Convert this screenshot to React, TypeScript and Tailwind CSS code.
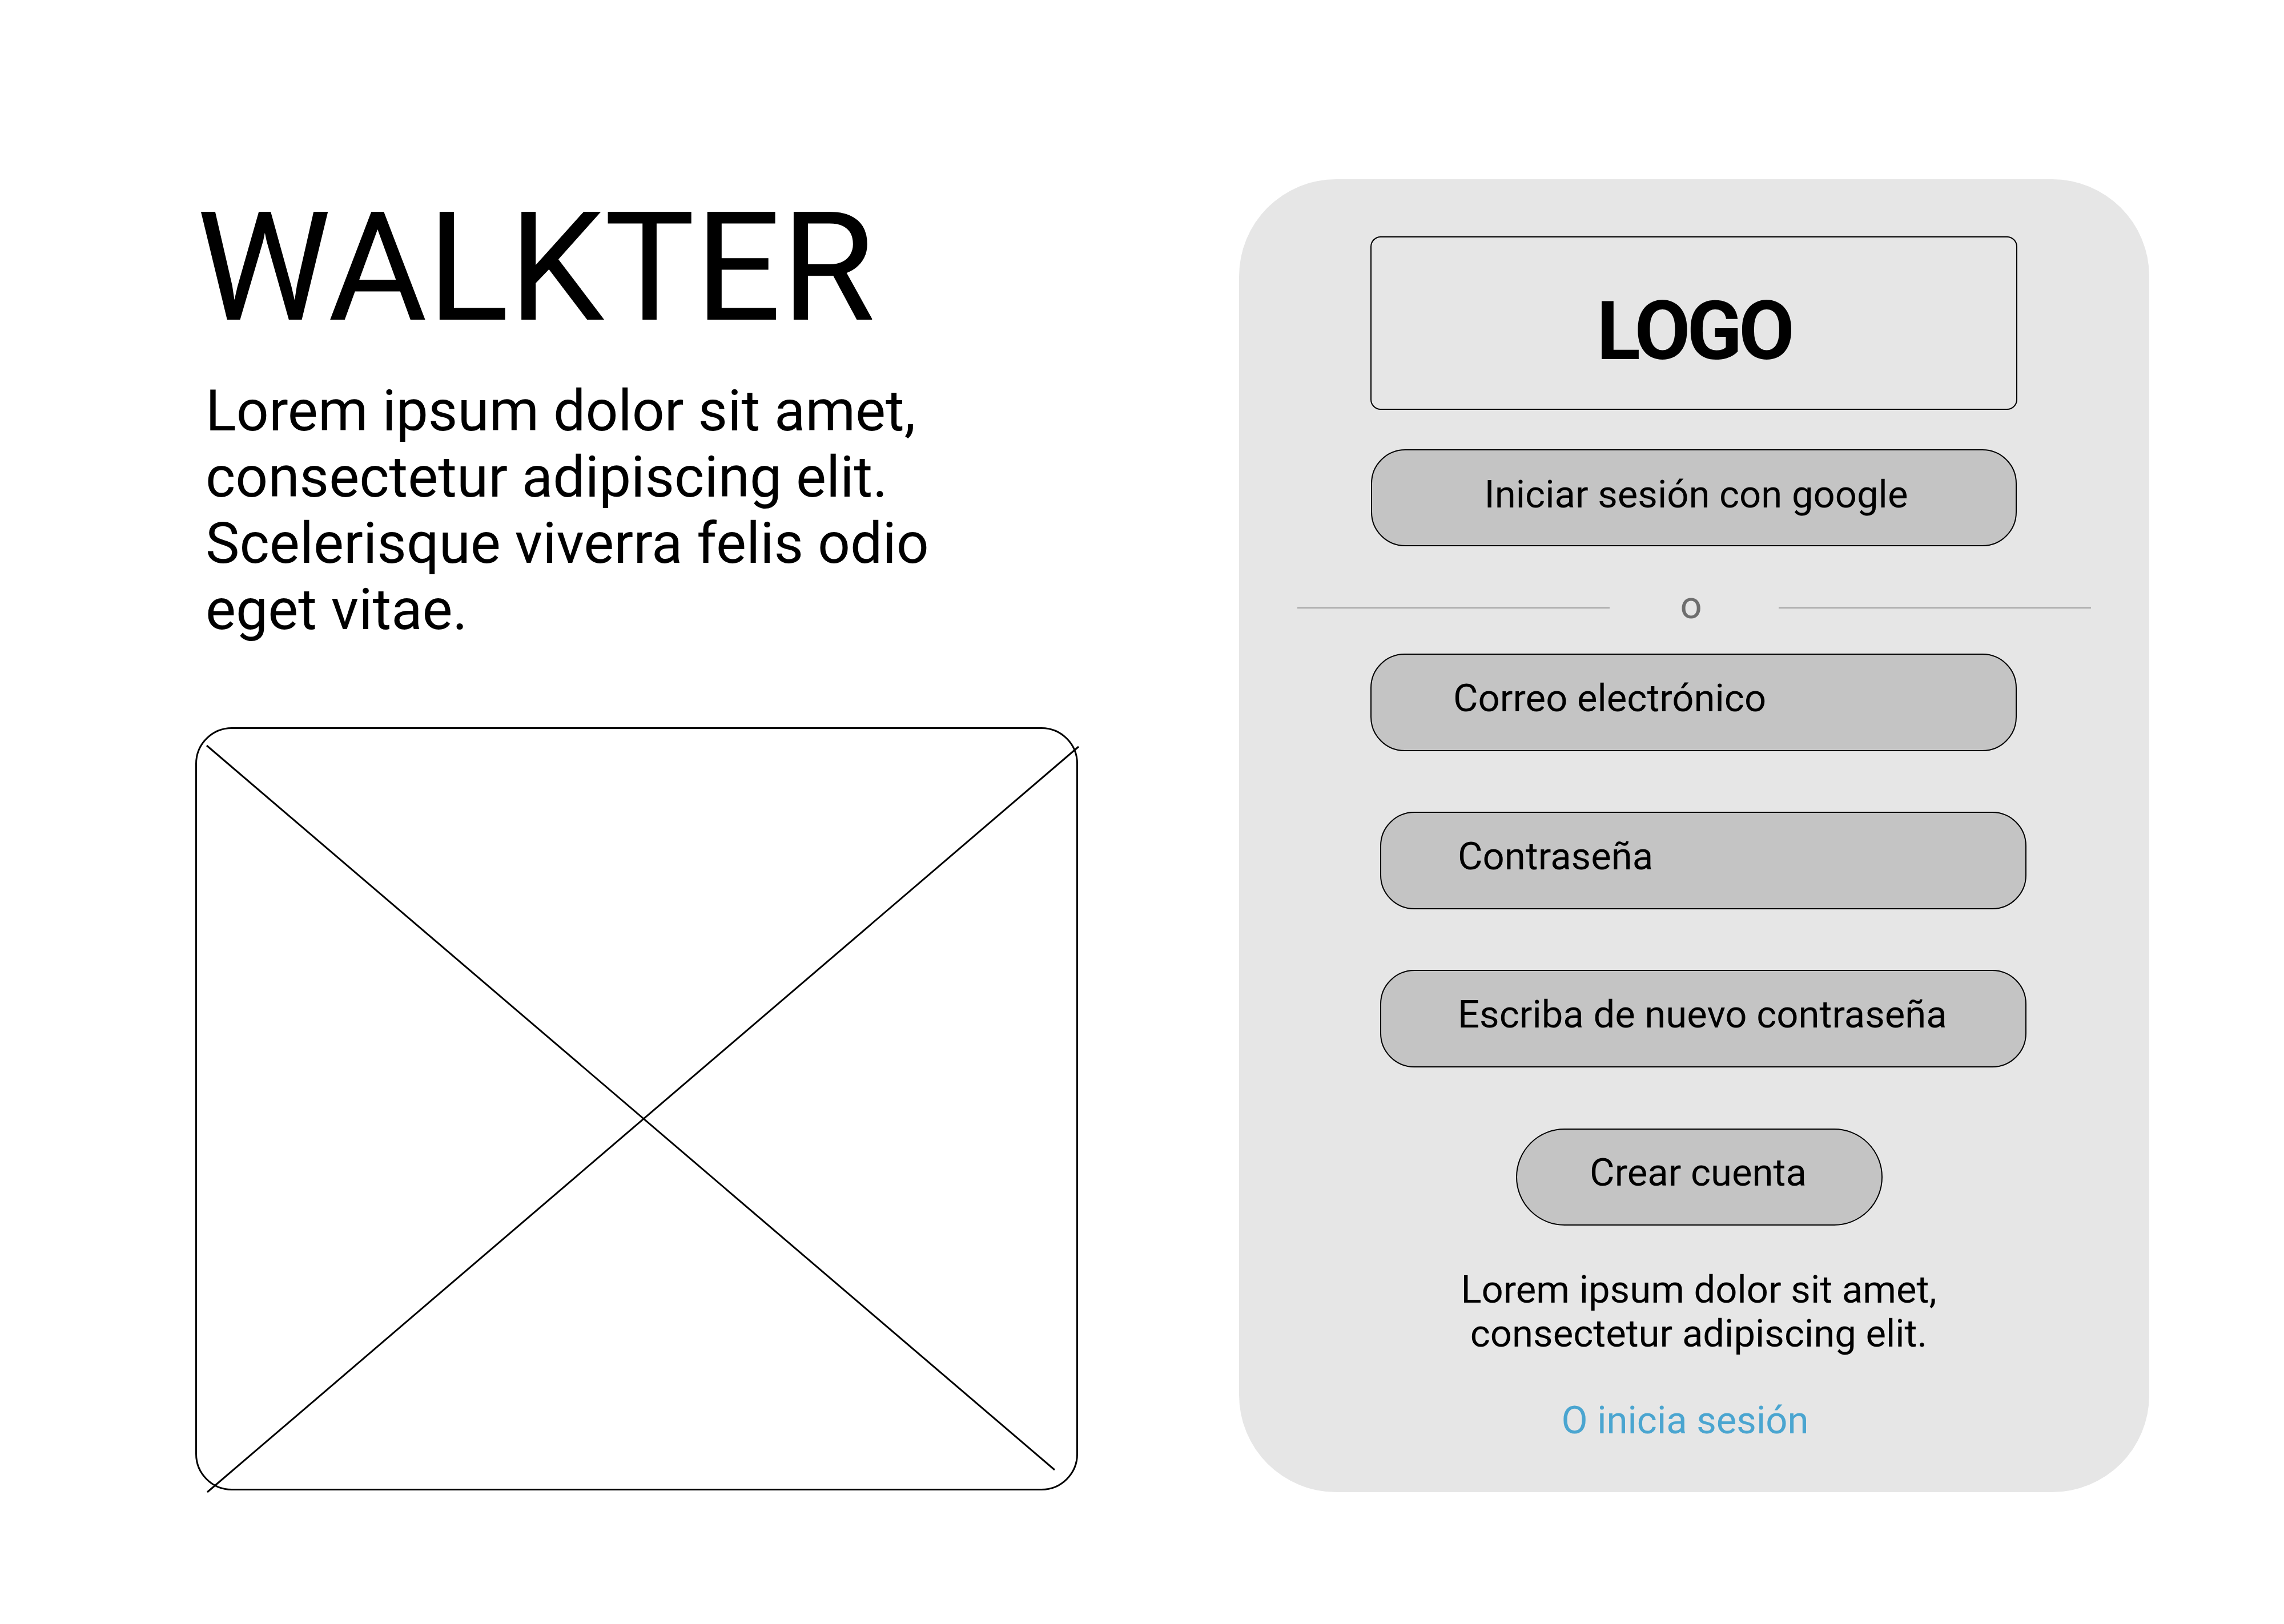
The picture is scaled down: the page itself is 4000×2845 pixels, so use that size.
import React from "react";

const font = "font-['Roboto','Liberation_Sans',sans-serif]";

function Field({ label, className }: { label: string; className: string }) {
    return (
        <div
            className={`flex h-[171px] w-[1132px] items-center rounded-[60px] border-2 border-black bg-[#c4c4c4] pb-[15px] text-[67px] leading-normal text-black ${className}`}
        >
            {label}
        </div>
    );
}

export default function App() {
    return (
        <div className={`flex h-[2845px] w-[4000px] items-start bg-white pl-[342px] ${font}`}>
            {/* left: brand + placeholder image */}
            <div className="flex w-[1546px] flex-col pt-[336px]">
                <h1 className="ml-[2px] text-[266px] leading-none font-normal text-black">WALKTER</h1>
                <p className="mt-[60px] ml-[18px] w-[1300px] text-[100px] leading-[116px] text-black">
                    Lorem ipsum dolor sit amet, consectetur adipiscing elit. Scelerisque viverra felis odio eget vitae.
                </p>
                <div className="relative mt-[148px] h-[1337px] w-[1546px] rounded-[64px] border-[3px] border-black">
                    <svg
                        className="absolute inset-0 overflow-visible"
                        width="1540"
                        height="1331"
                        viewBox="0 0 1540 1331"
                    >
                        <line x1="17" y1="29" x2="1502" y2="1298" stroke="black" strokeWidth="3" />
                        <line x1="18" y1="1337" x2="1544" y2="31" stroke="black" strokeWidth="3" />
                    </svg>
                </div>
            </div>

            {/* right: sign up card */}
            <div className="mt-[314px] ml-[282px] flex h-[2300px] w-[1594px] flex-col items-start rounded-[170px] bg-[#e6e6e6] pt-[100px]">
                <div className="ml-[230px] flex h-[304px] w-[1133px] items-center justify-center rounded-[18px] border-2 border-black pt-[30px] text-[142px] leading-none font-bold tracking-[-6px] text-black">
                    LOGO
                </div>
                <div className="mt-[69px] ml-[231px] flex h-[170px] w-[1131px] items-center justify-center rounded-[60px] border-2 border-black bg-[#c4c4c4] pb-[12px] pl-[8px] text-[67px] leading-normal text-black">
                    Iniciar sesión con google
                </div>

                <div className="mt-[68px] flex h-[80px] w-full items-center px-[102px]">
                    <div className="h-[2px] w-[547px] bg-[#a3a3a3]" />
                    <span className="flex-1 pr-[11px] pb-[10px] text-center text-[67px] leading-normal text-[#6e6e6e]">
                        o
                    </span>
                    <div className="h-[2px] w-[547px] bg-[#a3a3a3]" />
                </div>

                <Field label="Correo electrónico" className="mt-[40px] ml-[230px] pl-[143px]" />
                <Field label="Contraseña" className="mt-[106px] ml-[247px] pl-[134px]" />
                <Field label="Escriba de nuevo contraseña" className="mt-[106px] ml-[247px] pl-[134px]" />

                <button className="mt-[107px] ml-[485px] flex h-[170px] w-[642px] items-center justify-center rounded-full border-2 border-black bg-[#c4c4c4] pr-[4px] pb-[15px] text-[67px] leading-normal text-black">
                    Crear cuenta
                </button>

                <p className="mt-[74px] w-full pl-[16px] text-center text-[67px] leading-[77px] text-black">
                    Lorem ipsum dolor sit amet,
                    <br />
                    consectetur adipiscing elit.
                </p>
                <a className="mt-[75px] w-full pr-[32px] text-center text-[67px] leading-[77px] text-[#4aa5d0]">
                    O inicia sesión
                </a>
            </div>
        </div>
    );
}
